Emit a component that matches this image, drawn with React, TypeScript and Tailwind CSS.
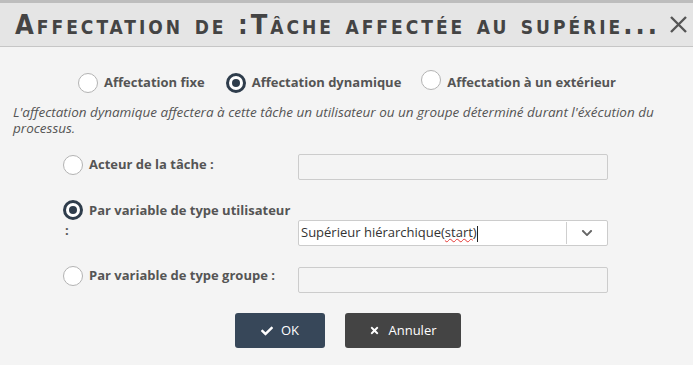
import { FaCheck, FaTimes, FaChevronDown } from "react-icons/fa";

function Radio({ checked = false }: { checked?: boolean }) {
  return (
    <span
      className={
        "inline-flex w-[20px] h-[20px] shrink-0 items-center justify-center rounded-full bg-white " +
        (checked ? "border-[3px] border-[#2f3d4c]" : "border border-[#b3b3b3]")
      }
    >
      {checked && <span className="w-[8px] h-[8px] rounded-full bg-[#2f3d4c]" />}
    </span>
  );
}

export default function App() {
  return (
    <div
      className="w-[693px] h-[365px] bg-[#f4f4f4] overflow-hidden text-[#555]"
      style={{ fontFamily: '"Open Sans", "Noto Sans", sans-serif' }}
    >
      {/* Title bar */}
      <div className="border-t-[3px] border-[#bdbdbd] bg-[#e5e5e5] border-b border-b-[#c6c6c6] h-[47px] flex items-center pl-[15px] pr-[5px]">
        <h1
          className="flex-1 min-w-0 text-[27px] font-bold text-[#444] tracking-[3px] whitespace-nowrap leading-none"
          style={{ fontFamily: '"DejaVu Sans Condensed", "Liberation Sans Narrow", sans-serif', fontVariant: "small-caps" }}
        >
          Affectation de :Tâche affectée au supérie...
        </h1>
        <svg width="19" height="19" viewBox="0 0 19 19" className="shrink-0">
          <path d="M2 2 L17 17 M17 2 L2 17" stroke="#555" strokeWidth="2.4" />
        </svg>
      </div>

      {/* Mode radios */}
      <div className="flex items-center pl-[78px] mt-[26px] h-[20px] text-[13px] font-bold">
        <Radio />
        <span className="ml-[6px]">Affectation fixe</span>
        <span className="ml-[21px]"><Radio checked /></span>
        <span className="ml-[6px]">Affectation dynamique</span>
        <span className="ml-[20px]"><Radio /></span>
        <span className="ml-[6px]">Affectation à un extérieur</span>
      </div>

      <p className="mt-[11px] pl-[13px] text-[13.5px] italic leading-[16px] whitespace-nowrap">
        L'affectation dynamique affectera à cette tâche un utilisateur ou un groupe déterminé durant l'éxécution du
        <br />
        processus.
      </p>

      {/* Rows */}
      <div className="mt-[18px] pl-[63px] flex flex-col gap-[20px] text-[13px] font-bold">
        <div className="flex items-start">
          <label className="w-[235px] flex items-center h-[20px] gap-[6px] mt-px">
            <Radio />
            Acteur de la tâche :
          </label>
          <div className="w-[310px] h-[26px] border border-[#cccccc] rounded-[2px] bg-[#f4f4f4]" />
        </div>

        <div className="flex items-start">
          <label className="w-[235px] leading-[20px]">
            <span className="flex items-center gap-[6px]">
              <Radio checked />
              Par variable de type utilisateur
            </span>
            <span className="block pl-[2px]">:</span>
          </label>
          <div className="mt-[20px] w-[310px] h-[26px] border border-[#cccccc] rounded-[2px] bg-white flex items-center font-normal text-[13px] text-[#333]">
            <span className="flex-1 pl-[2px] whitespace-nowrap">
              Supérieur hiérarchique(<span className="underline decoration-wavy decoration-[#e53935] decoration-1">start</span>)
              <span className="inline-block w-px h-[16px] bg-[#222] align-middle" />
            </span>
            <span className="w-px h-[22px] bg-[#cfcfcf]" />
            <span className="w-[40px] flex justify-center text-[#666]">
              <FaChevronDown className="w-[12px] h-[12px]" />
            </span>
          </div>
        </div>

        <div className="flex items-start">
          <label className="w-[235px] flex items-center h-[20px] gap-[6px]">
            <Radio />
            Par variable de type groupe :
          </label>
          <div className="mt-px w-[310px] h-[26px] border border-[#cccccc] rounded-[2px] bg-[#f4f4f4]" />
        </div>
      </div>

      {/* Buttons */}
      <div className="mt-[20px] flex pl-[235px] gap-[20px] text-[13px] text-white">
        <button className="w-[90px] h-[35px] rounded-[3px] bg-[#374759] flex items-center justify-center gap-[8px]">
          <FaCheck className="w-[12px] h-[12px]" />
          OK
        </button>
        <button className="w-[116px] h-[35px] rounded-[3px] bg-[#444444] flex items-center justify-center gap-[8px]">
          <FaTimes className="w-[11px] h-[11px]" />
          Annuler
        </button>
      </div>
    </div>
  );
}
